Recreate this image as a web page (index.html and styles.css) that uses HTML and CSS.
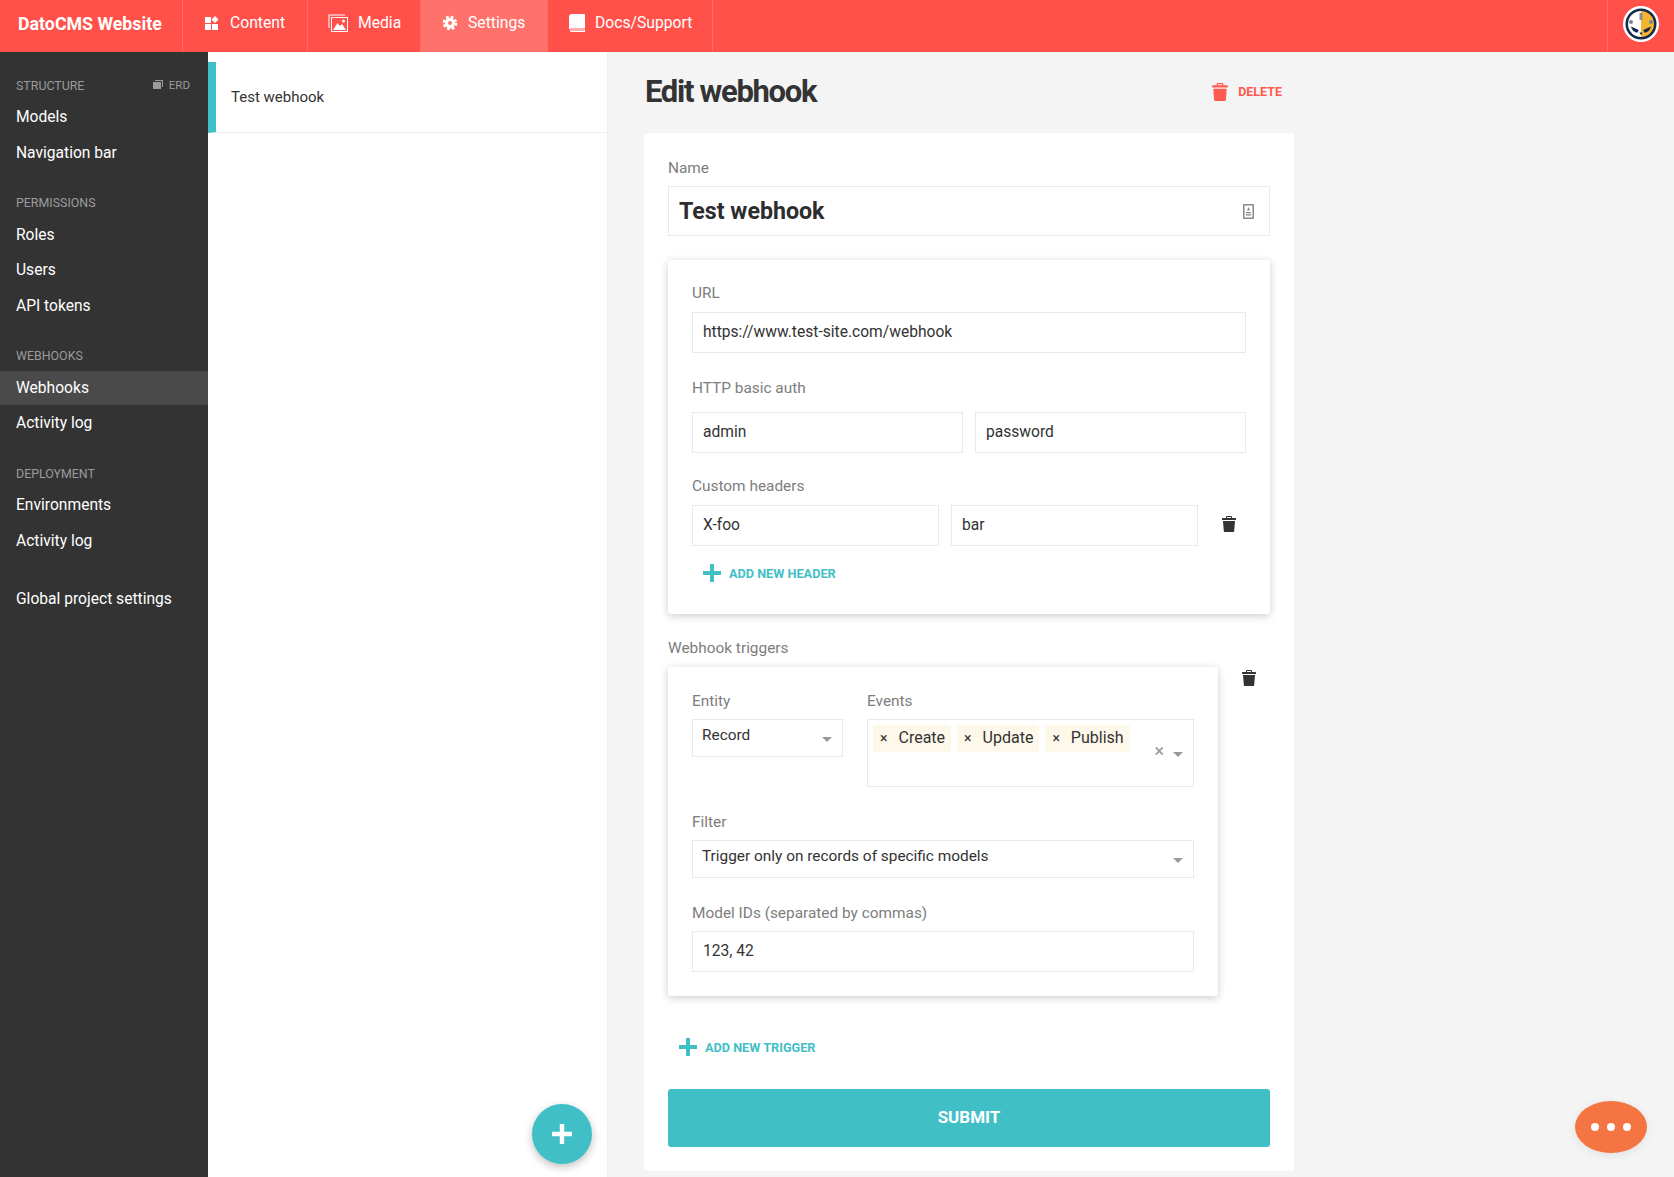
FILE: index.html
```html
<!DOCTYPE html>
<html>
<head>
  <meta charset="utf-8">
  <title>Edit webhook</title>
  <link rel="stylesheet" href="styles.css">
</head>
<body>
  <svg class="defs" width="0" height="0">
    <symbol id="trash" viewBox="0 0 14 16">
      <path d="M5 0h4a1 1 0 0 1 1 1v1h3.300a.7.7 0 0 1 .7.7V4H0V2.700A.7.7 0 0 1 .7 2H4V1a1 1 0 0 1 1-1zm0 1v1h4V1zM1 5h12l-.8 10a1 1 0 0 1-1 1H2.800a1 1 0 0 1-1-1z"/>
    </symbol>
    <symbol id="plus" viewBox="0 0 18 18">
      <path d="M7 0h4v7h7v4h-7v7H7v-7H0V7h7z"/>
    </symbol>
    <symbol id="arrow" viewBox="0 0 10 5">
      <path d="M0 0h10L5 5z"/>
    </symbol>
  </svg>

  <header class="topbar">
    <div class="brand">DatoCMS Website</div>
    <a class="tab tab-content">
      <svg class="tab-icon" viewBox="0 0 16 14"><path d="M1 1h6v6H1zM1 8h6v6H1zM8 8h6v6H8zM11 0l3.500 3.500L11 7 7.500 3.500z"/></svg>
      Content
    </a>
    <a class="tab tab-media">
      <svg class="tab-icon tab-icon-media" viewBox="0 0 20 18"><path d="M.5.500h16.500v1H1.500v12.500H.5z"/><path fill-rule="evenodd" d="M3 3h17v15H3zm1 1v13h15V4z"/><path d="M5 16l4.500-7 2.500 3 2-2 4 6z"/><circle cx="15.500" cy="7" r="1.500"/></svg>
      Media
    </a>
    <a class="tab tab-settings">
      <svg class="tab-icon" viewBox="0 0 16 16">
        <circle class="gear-teeth" cx="8" cy="8" r="5.800"/>
        <path fill-rule="evenodd" d="M8 2.800a5.200 5.200 0 1 1 0 10.400A5.200 5.200 0 0 1 8 2.800zM8 6a2 2 0 1 0 0 4 2 2 0 0 0 0-4z"/>
      </svg>
      Settings
    </a>
    <a class="tab tab-docs">
      <svg class="tab-icon tab-icon-docs" viewBox="0 0 16 18"><path d="M3 0h12a1 1 0 0 1 1 1v13.500H2.700c-.9 0-1.700.3-2.700 1V3a3 3 0 0 1 3-3z"/><path d="M2.500 15.500H16v2.500H2.500A1.500 1.500 0 0 1 1 16.700c0-.7.700-1.200 1.500-1.200zm0 1c-.3 0-.5.100-.5.300s.2.300.5.300H15v-.6z"/></svg>
      Docs/Support
    </a>
    <div class="topbar-user">
      <svg class="avatar" viewBox="0 0 36 36">
        <circle cx="18" cy="18" r="18" fill="#fff"/>
        <circle cx="18" cy="18" r="15.500" fill="#12284c"/>
        <path d="M18 5a13 13 0 0 0 0 26z" fill="#fff"/>
        <path d="M18 5a13 13 0 0 1 0 26z" fill="#f7b42f"/>
        <circle cx="8" cy="16" r="2" fill="#7d8794"/>
        <circle cx="28" cy="16" r="2" fill="#7d8794"/>
        <path d="M8 20.500l7.700 3.500-1 2.500c-3 .3-5.700-2-6.700-6z" fill="#12284c"/>
        <path d="M28 20.500l-7.700 3.500 1 2.500c3 .3 5.700-2 6.700-6z" fill="#12284c"/>
        <rect x="16.500" y="7" width="3" height="7" fill="#8a8f99"/>
        <path d="M16.300 26.500h3.400l-1.700 2.500z" fill="#12284c"/>
      </svg>
    </div>
  </header>

  <div class="layout">
    <nav class="sidebar">
      <div class="side-group">
        <div class="side-label">
          STRUCTURE
          <span class="erd">
            <svg class="erd-icon" viewBox="0 0 10 10"><path d="M2 0h8v7H9V1H2z"/><path d="M0 2h8v7H0z"/></svg>
            ERD
          </span>
        </div>
        <a class="side-item">Models</a>
        <a class="side-item">Navigation bar</a>
      </div>
      <div class="side-group">
        <div class="side-label">PERMISSIONS</div>
        <a class="side-item">Roles</a>
        <a class="side-item">Users</a>
        <a class="side-item">API tokens</a>
      </div>
      <div class="side-group">
        <div class="side-label">WEBHOOKS</div>
        <a class="side-item side-item-active">Webhooks</a>
        <a class="side-item">Activity log</a>
      </div>
      <div class="side-group side-group-last">
        <div class="side-label">DEPLOYMENT</div>
        <a class="side-item">Environments</a>
        <a class="side-item">Activity log</a>
      </div>
      <a class="side-item">Global project settings</a>
    </nav>

    <aside class="list-panel">
      <div class="list-item">Test webhook</div>
      <button class="fab"><svg class="fab-icon" viewBox="0 0 18 18"><use href="#plus"/></svg></button>
    </aside>

    <main class="main">
      <div class="title-row">
        <h1>Edit webhook</h1>
        <a class="delete">
          <svg class="delete-icon" viewBox="0 0 14 16"><use href="#trash"/></svg>
          DELETE
        </a>
      </div>

      <form class="card">
        <label class="label label-name">Name</label>
        <div class="input input-name">
          Test webhook
          <svg class="name-icon" viewBox="0 0 11 15"><path fill-rule="evenodd" d="M1 0h9a1 1 0 0 1 1 1v13a1 1 0 0 1-1 1H1a1 1 0 0 1-1-1V1a1 1 0 0 1 1-1zm.5 1.500v12h8v-12z"/><path d="M5.500 3L7 6.500H4zM3 8h5v1.300H3zM3 10.300h5v1.300H3z"/></svg>
        </div>

        <div class="panel panel-url">
          <label class="label">URL</label>
          <div class="input">https://www.test-site.com/webhook</div>

          <label class="label label-spaced">HTTP basic auth</label>
          <div class="row row-auth">
            <div class="input">admin</div>
            <div class="input">password</div>
          </div>

          <label class="label label-headers">Custom headers</label>
          <div class="row">
            <div class="input">X-foo</div>
            <div class="input">bar</div>
            <svg class="trash trash-header" viewBox="0 0 14 16"><use href="#trash"/></svg>
          </div>

          <a class="add add-header">
            <svg class="add-icon" viewBox="0 0 18 18"><use href="#plus"/></svg>
            ADD NEW HEADER
          </a>
        </div>

        <label class="label label-triggers">Webhook triggers</label>
        <div class="trigger">
          <div class="panel panel-trigger">
            <div class="row row-entity">
              <div class="col-entity">
                <label class="label">Entity</label>
                <div class="select select-entity">
                  <span>Record</span>
                  <svg class="caret" viewBox="0 0 10 5"><use href="#arrow"/></svg>
                </div>
              </div>
              <div class="col-events">
                <label class="label">Events</label>
                <div class="multi">
                  <div class="tags">
                    <span class="tag"><i>×</i>Create</span>
                    <span class="tag"><i>×</i>Update</span>
                    <span class="tag"><i>×</i>Publish</span>
                  </div>
                  <span class="clear">×</span>
                  <svg class="caret" viewBox="0 0 10 5"><use href="#arrow"/></svg>
                </div>
              </div>
            </div>

            <label class="label label-spaced">Filter</label>
            <div class="select">
              <span>Trigger only on records of specific models</span>
              <svg class="caret" viewBox="0 0 10 5"><use href="#arrow"/></svg>
            </div>

            <label class="label label-spaced">Model IDs (separated by commas)</label>
            <div class="input">123, 42</div>
          </div>
          <svg class="trash trash-trigger" viewBox="0 0 14 16"><use href="#trash"/></svg>
        </div>

        <a class="add add-trigger">
          <svg class="add-icon" viewBox="0 0 18 18"><use href="#plus"/></svg>
          ADD NEW TRIGGER
        </a>

        <button class="submit" type="button">SUBMIT</button>
      </form>
    </main>
  </div>

  <div class="chat"><span></span><span></span><span></span></div>
</body>
</html>
```

FILE: styles.css
```css
html {
  font-family: Roboto, "Liberation Sans", sans-serif;
}
body {
  margin: 0;
  height: 1177px;
  overflow: hidden;
  background: #f4f4f4;
  color: #333;
  font-size: 15px;
}
a {
  text-decoration: none;
}
.defs {
  display: block;
  height: 0;
}

/* top bar */
.topbar {
  display: flex;
  height: 52px;
  background: #ff514a;
  color: #fff;
}
.brand {
  width: 164px;
  border-right: 1px solid #ff6b64;
  padding-left: 18px;
  line-height: 48px;
  font-size: 17.8px;
  font-weight: 700;
}
.tab {
  display: flex;
  align-items: center;
  gap: 10px;
  box-sizing: border-box;
  padding-bottom: 7px;
  border-right: 1px solid #ff6b64;
  font-size: 15.7px;
}
.tab-content {
  width: 125px;
  padding-left: 21px;
}
.tab-media {
  width: 113px;
  padding-left: 20px;
}
.tab-settings {
  width: 127px;
  padding-left: 21px;
  background: #ff726b;
}
.tab-docs {
  width: 165px;
  padding-left: 21px;
}
.tab-icon {
  width: 16px;
  height: 16px;
  fill: #fff;
}
.tab-icon-media {
  width: 20px;
  height: 18px;
}
.tab-icon-docs {
  width: 16px;
  height: 18px;
}
.gear-teeth {
  fill: none;
  stroke: #fff;
  stroke-width: 3;
  stroke-dasharray: 2.600 1.950;
}
.topbar-user {
  display: flex;
  align-items: center;
  justify-content: center;
  margin-left: auto;
  width: 67px;
  border-left: 1px solid #ff6b64;
  padding-bottom: 4px;
  box-sizing: border-box;
}
.avatar {
  width: 36px;
  height: 36px;
}

.layout {
  display: flex;
  height: 1125px;
}

/* sidebar */
.sidebar {
  flex: 0 0 208px;
  background: #333;
  color: #fff;
  padding-top: 23px;
  box-sizing: border-box;
}
.side-group {
  margin-bottom: 23px;
}
.side-group-last {
  margin-bottom: 24px;
}
.side-label {
  display: flex;
  justify-content: space-between;
  align-items: center;
  height: 20px;
  margin-bottom: 5px;
  padding: 0 18px 0 16px;
  color: #9b9b9b;
  font-size: 12.4px;
}
.erd {
  display: flex;
  align-items: center;
  gap: 6px;
  font-size: 11.5px;
}
.erd-icon {
  width: 10px;
  height: 10px;
  fill: #9b9b9b;
}
.side-item {
  display: block;
  height: 34px;
  line-height: 34px;
  margin-bottom: 1.500px;
  padding-left: 16px;
  font-size: 15.6px;
}
.side-item-active {
  background: #4a4a4a;
}

/* list of webhooks */
.list-panel {
  position: relative;
  flex: 0 0 400px;
  background: #fff;
  border-right: 1px solid #eee;
  box-sizing: border-box;
  padding-top: 10px;
}
.list-item {
  height: 71px;
  line-height: 70px;
  border-left: 8px solid #41bfc7;
  border-bottom: 1px solid #eee;
  padding-left: 15px;
  box-sizing: border-box;
  font-size: 15px;
}
.fab {
  position: absolute;
  left: 324px;
  top: 1052px;
  width: 60px;
  height: 60px;
  border: 0;
  border-radius: 50%;
  background: #41bfc7;
  box-shadow: 0 3px 8px rgba(0, 0, 0, 0.25);
  display: flex;
  align-items: center;
  justify-content: center;
}
.fab-icon {
  width: 20px;
  height: 20px;
  fill: #fff;
}

/* main column */
.main {
  padding-left: 36px;
  width: 650px;
}
.title-row {
  display: flex;
  justify-content: space-between;
  align-items: center;
  height: 79px;
  margin-bottom: 2px;
  padding-right: 12px;
}
h1 {
  margin: 0 0 0 1px;
  font-size: 31px;
  font-weight: 700;
  letter-spacing: -1.300px;
  color: #333;
}
.delete {
  display: flex;
  align-items: center;
  gap: 10px;
  color: #ff5a4f;
  font-size: 12.5px;
  font-weight: 700;
}
.delete-icon {
  width: 16px;
  height: 18px;
  fill: #ff5a4f;
}

.card {
  display: block;
  background: #fff;
  border-radius: 3px;
  padding: 25px 24px 24px;
  height: 1038px;
  box-sizing: border-box;
}
.label {
  display: block;
  height: 20px;
  line-height: 20px;
  color: #7d7d7d;
  font-size: 15.4px;
  margin-bottom: 9px;
}
.label-name {
  margin-bottom: 8px;
}
.label-spaced {
  margin-top: 25px;
  margin-bottom: 8px;
}
.label-headers {
  margin-top: 23px;
  margin-bottom: 9px;
}
.input {
  display: flex;
  align-items: center;
  justify-content: space-between;
  height: 41px;
  box-sizing: border-box;
  border: 1px solid #e9e9e9;
  padding: 0 10px 2px;
  font-size: 15.6px;
  background: #fff;
}
.input-name {
  height: 50px;
  padding-bottom: 0;
  font-size: 23.2px;
  font-weight: 700;
  color: #2d2d2d;
}
.name-icon {
  width: 11px;
  height: 15px;
  fill: #888;
  margin-right: 5px;
}
.panel {
  background: #fff;
  border-radius: 3px;
  padding: 23px 24px;
  box-shadow: 0 2px 8px rgba(0, 0, 0, 0.2);
}
.panel-url {
  height: 354px;
  box-sizing: border-box;
  margin-top: 24px;
}
.row {
  display: flex;
  align-items: center;
  gap: 12px;
}
.row .input {
  flex: 1;
}
.row-auth {
  margin-top: 14px;
}
.trash {
  width: 14px;
  height: 16px;
  fill: #333;
  flex: none;
}
.trash-header {
  margin: 0 10px 3px 12px;
}
.add {
  display: flex;
  align-items: center;
  gap: 8px;
  height: 20px;
  padding-left: 11px;
  color: #41bfc7;
  font-size: 12.7px;
  font-weight: 700;
}
.add-icon {
  width: 18px;
  height: 18px;
  fill: #41bfc7;
}
.add-header {
  margin-top: 17px;
}
.label-triggers {
  margin: 24px 0 9px;
}
.trigger {
  display: flex;
  align-items: flex-start;
}
.panel-trigger {
  flex: 0 0 550px;
  height: 329px;
  box-sizing: border-box;
  padding-top: 24px;
}
.trash-trigger {
  margin: 3px 0 0 24px;
}
.row-entity {
  align-items: flex-start;
  gap: 24px;
}
.col-entity {
  flex: 0 0 151px;
}
.col-events {
  flex: 0 0 327px;
}
.row-entity .label {
  margin-bottom: 8px;
}
.select {
  display: flex;
  justify-content: space-between;
  height: 38px;
  box-sizing: border-box;
  border: 1px solid #e9e9e9;
  padding: 6px 10px 0 9px;
  font-size: 15.4px;
}
.caret {
  width: 10px;
  height: 5px;
  fill: #999;
  margin-top: 11px;
}
.multi {
  display: flex;
  height: 68px;
  box-sizing: border-box;
  border: 1px solid #e9e9e9;
  padding: 5px 10px 0 5px;
  font-size: 16px;
}
.tags {
  display: flex;
  gap: 6px;
  height: 27px;
  flex: 1;
}
.tag {
  display: flex;
  align-items: center;
  padding: 0 6px 2px 7px;
  background: #fdf8e9;
  border-radius: 3px;
}
.tag i {
  font-style: normal;
  font-size: 14px;
  margin-right: 11px;
}
.clear {
  color: #999;
  font-size: 18px;
  line-height: 18px;
  margin: 17px 9px 0 0;
}
.multi .caret {
  margin-top: 27px;
}
.add-trigger {
  margin-top: 41px;
}
.submit {
  display: block;
  width: 100%;
  height: 58px;
  margin-top: 32px;
  padding-bottom: 3px;
  border: 0;
  border-radius: 3px;
  background: #41bfc7;
  color: #fff;
  font-family: inherit;
  font-size: 17px;
  font-weight: 700;
}

.chat {
  position: absolute;
  left: 1575px;
  top: 1101px;
  width: 72px;
  height: 52px;
  border-radius: 36px / 26px;
  background: #f47442;
  box-shadow: 0 2px 10px rgba(0, 0, 0, 0.08);
  display: flex;
  align-items: center;
  justify-content: center;
  gap: 8px;
}
.chat span {
  width: 8px;
  height: 8px;
  border-radius: 50%;
  background: #fff;
}
```
